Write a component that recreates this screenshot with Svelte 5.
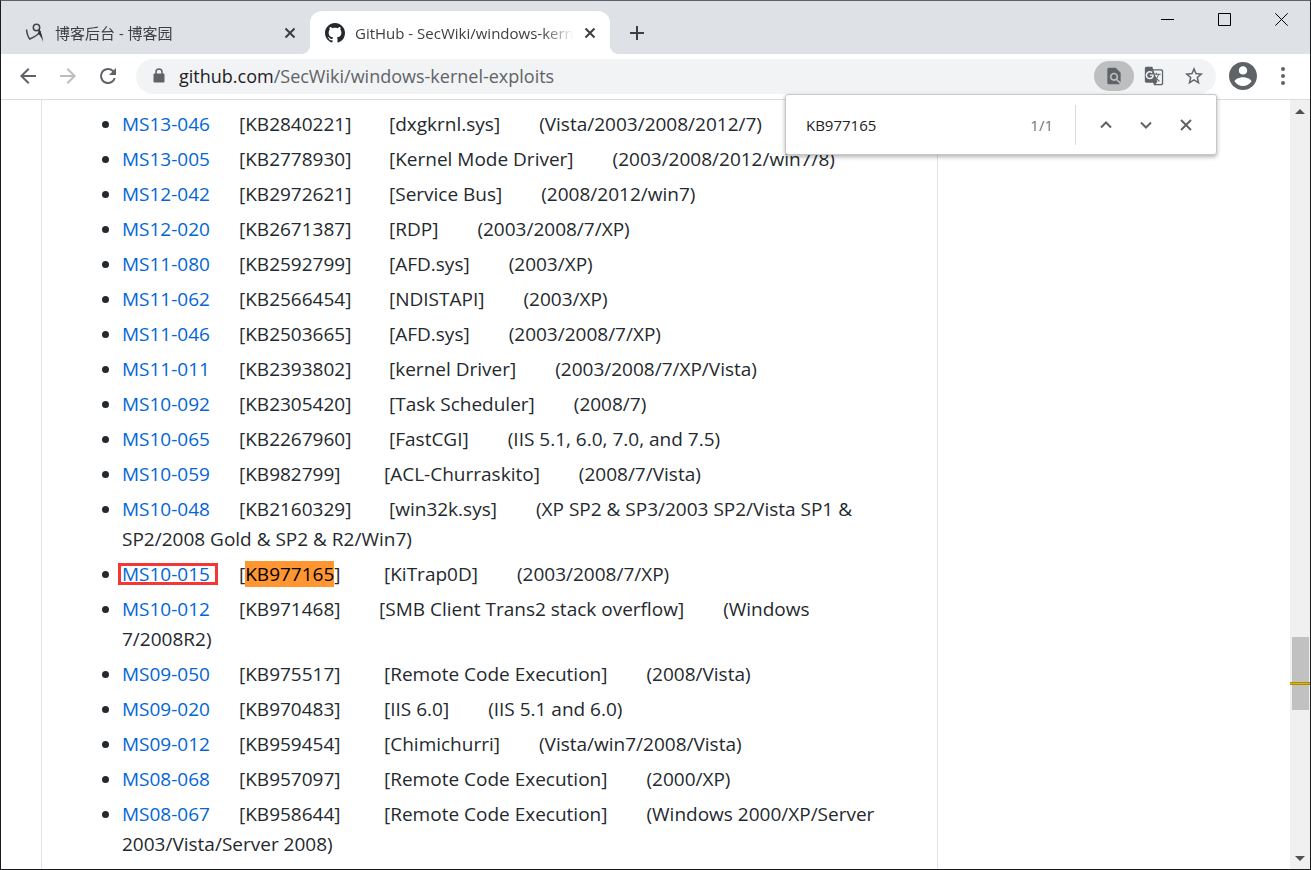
<script lang="ts">
	type Advisory = {
		id: string;
		kb: string;
		name: string;
		targets: string;
		gap?: 'short' | 'tight';
		marked?: boolean;
	};

	const advisories: Advisory[] = [
		{ id: 'MS13-046', kb: 'KB2840221', name: 'dxgkrnl.sys', targets: 'Vista/2003/2008/2012/7' },
		{ id: 'MS13-005', kb: 'KB2778930', name: 'Kernel Mode Driver', targets: '2003/2008/2012/win7/8' },
		{ id: 'MS12-042', kb: 'KB2972621', name: 'Service Bus', targets: '2008/2012/win7' },
		{ id: 'MS12-020', kb: 'KB2671387', name: 'RDP', targets: '2003/2008/7/XP' },
		{ id: 'MS11-080', kb: 'KB2592799', name: 'AFD.sys', targets: '2003/XP' },
		{ id: 'MS11-062', kb: 'KB2566454', name: 'NDISTAPI', targets: '2003/XP' },
		{ id: 'MS11-046', kb: 'KB2503665', name: 'AFD.sys', targets: '2003/2008/7/XP' },
		{ id: 'MS11-011', kb: 'KB2393802', name: 'kernel Driver', targets: '2003/2008/7/XP/Vista' },
		{ id: 'MS10-092', kb: 'KB2305420', name: 'Task Scheduler', targets: '2008/7' },
		{ id: 'MS10-065', kb: 'KB2267960', name: 'FastCGI', targets: 'IIS 5.1, 6.0, 7.0, and 7.5' },
		{ id: 'MS10-059', kb: 'KB982799', name: 'ACL-Churraskito', targets: '2008/7/Vista', gap: 'short' },
		{ id: 'MS10-048', kb: 'KB2160329', name: 'win32k.sys', targets: 'XP SP2 & SP3/2003 SP2/Vista SP1 & SP2/2008 Gold & SP2 & R2/Win7' },
		{ id: 'MS10-015', kb: 'KB977165', name: 'KiTrap0D', targets: '2003/2008/7/XP', gap: 'short', marked: true },
		{ id: 'MS10-012', kb: 'KB971468', name: 'SMB Client Trans2 stack overflow', targets: 'Windows 7/2008R2', gap: 'tight' },
		{ id: 'MS09-050', kb: 'KB975517', name: 'Remote Code Execution', targets: '2008/Vista', gap: 'short' },
		{ id: 'MS09-020', kb: 'KB970483', name: 'IIS 6.0', targets: 'IIS 5.1 and 6.0', gap: 'short' },
		{ id: 'MS09-012', kb: 'KB959454', name: 'Chimichurri', targets: 'Vista/win7/2008/Vista', gap: 'short' },
		{ id: 'MS08-068', kb: 'KB957097', name: 'Remote Code Execution', targets: '2000/XP', gap: 'short' },
		{ id: 'MS08-067', kb: 'KB958644', name: 'Remote Code Execution', targets: 'Windows 2000/XP/Server 2003/Vista/Server 2008', gap: 'short' }
	];

	let query = $state('KB977165');
</script>

<div class="window">
	<header class="tab-strip">
		<div class="tab">
			<svg class="favicon" viewBox="0 0 20 20" aria-hidden="true">
				<circle cx="11.5" cy="4.500" r="3.200" fill="none" stroke="#444" stroke-width="1.500" />
				<path d="M1.500 6.500c.4 3.500 1.200 7 3.300 9.500 4.500-1.800 8-4 10.800-7.600" fill="none" stroke="#444" stroke-width="1.500" />
				<path d="M14 5.500c2.200 3.500 3.600 8 4.200 13.500-1.200-3.600-2.800-6.500-5.200-8.500z" fill="#333" />
			</svg>
			<span class="tab-title">博客后台 - 博客园</span>
			<button class="tab-close" aria-label="Close tab">
				<svg viewBox="0 0 12 12"><path d="M1.500 1.500l9 9M10.500 1.500l-9 9" /></svg>
			</button>
		</div>
		<div class="tab active">
			<svg class="favicon" viewBox="0 0 16 16" aria-hidden="true">
				<path fill="#24292e" d="M8 0C3.580 0 0 3.580 0 8c0 3.540 2.290 6.530 5.470 7.590.4.070.55-.17.55-.38 0-.19-.01-.82-.01-1.490-2.010.37-2.530-.49-2.690-.94-.09-.23-.48-.94-.82-1.130-.28-.15-.68-.52-.01-.53.63-.01 1.080.58 1.230.82.72 1.210 1.870.87 2.330.66.070-.52.28-.87.51-1.070-1.780-.2-3.640-.89-3.640-3.950 0-.87.31-1.590.82-2.150-.08-.2-.36-1.020.08-2.120 0 0 .67-.21 2.200.82.64-.18 1.320-.27 2-.27s1.360.09 2 .27c1.530-1.040 2.200-.82 2.200-.82.44 1.100.16 1.920.08 2.120.51.56.82 1.270.82 2.150 0 3.070-1.870 3.750-3.650 3.950.29.25.54.73.54 1.480 0 1.070-.01 1.930-.01 2.200 0 .21.15.46.55.38A8.010 8.010 0 0016 8c0-4.420-3.580-8-8-8z" />
			</svg>
			<span class="tab-title">GitHub - SecWiki/windows-kernel-exploits</span>
			<button class="tab-close" aria-label="Close tab">
				<svg viewBox="0 0 12 12"><path d="M1.500 1.500l9 9M10.500 1.500l-9 9" /></svg>
			</button>
		</div>
		<button class="new-tab" aria-label="New tab">
			<svg viewBox="0 0 16 16"><path d="M8 1v14M1 8h14" /></svg>
		</button>
		<div class="window-controls">
			<button aria-label="Minimize">
				<svg viewBox="0 0 13 13"><path d="M0 6.500h13" /></svg>
			</button>
			<button aria-label="Maximize">
				<svg viewBox="0 0 13 13"><path d="M.5.5h12v12H.5z" /></svg>
			</button>
			<button aria-label="Close">
				<svg viewBox="0 0 13 13"><path d="M.3.3l12.400 12.400M12.700.3L.3 12.700" /></svg>
			</button>
		</div>
	</header>

	<nav class="toolbar">
		<button class="nav-button" aria-label="Back">
			<svg viewBox="0 0 24 24"><path d="M20 11H7.830l5.590-5.590L12 4l-8 8 8 8 1.410-1.410L7.830 13H20v-2z" /></svg>
		</button>
		<button class="nav-button" aria-label="Forward" disabled>
			<svg viewBox="0 0 24 24"><path d="M12 4l-1.410 1.410L16.170 11H4v2h12.170l-5.580 5.590L12 20l8-8z" /></svg>
		</button>
		<button class="nav-button" aria-label="Reload">
			<svg viewBox="0 0 24 24"><path d="M17.650 6.350A7.960 7.960 0 0012 4a8 8 0 107.730 10h-2.080A6 6 0 1112 6c1.660 0 3.140.69 4.220 1.780L13 11h7V4l-2.350 2.350z" /></svg>
		</button>

		<div class="omnibox">
			<svg class="lock" viewBox="0 0 12 16" aria-hidden="true">
				<path d="M3 6V4a3 3 0 016 0v2" fill="none" stroke="#5f6368" stroke-width="1.500" />
				<rect x="0.500" y="5.500" width="11" height="9" rx="1" fill="#5f6368" />
			</svg>
			<a class="url" href="https://github.com/SecWiki/windows-kernel-exploits"><b>github.com</b>/SecWiki/windows-kernel-exploits</a>
			<button class="page-action pressed" aria-label="Find in page">
				<svg viewBox="0 0 24 24"><path d="M20 19.590V8l-6-6H6c-1.100 0-1.990.9-1.990 2L4 20c0 1.100.89 2 1.990 2H18c.45 0 .85-.15 1.190-.4l-4.430-4.430c-.8.52-1.740.83-2.760.83-2.760 0-5-2.240-5-5s2.240-5 5-5 5 2.240 5 5c0 1.020-.31 1.960-.83 2.750L20 19.590zM9 13c0 1.660 1.340 3 3 3s3-1.340 3-3-1.340-3-3-3-3 1.340-3 3z" /></svg>
			</button>
			<button class="page-action" aria-label="Translate this page">
				<svg viewBox="0 0 24 24"><path d="M21 4H11l-1-3H3c-1.100 0-2 .9-2 2v15c0 1.100.9 2 2 2h8l1 3h9c1.100 0 2-.9 2-2V6c0-1.100-.9-2-2-2zM7 16c-2.760 0-5-2.240-5-5s2.240-5 5-5c1.350 0 2.480.5 3.350 1.300L9.030 8.570c-.38-.36-1.040-.78-2.030-.78-1.740 0-3.150 1.440-3.150 3.210S5.260 14.210 7 14.210c2.010 0 2.840-1.440 2.920-2.410H7v-1.710h4.680c.070.31.12.61.12 1.020C11.800 13.970 9.890 16 7 16zm6.170-5.420h3.700c-.43 1.250-1.110 2.430-2.050 3.470-.31-.35-.6-.72-.86-1.100l-.79-2.370zm8.330 9.920c0 .55-.45 1-1 1H14l2-2.500-1.040-3.100 3.100 3.100.92-.92-3.300-3.250.02-.02c1.130-1.250 1.930-2.690 2.400-4.220H20v-1.300h-4.530V8h-1.290v1.290h-1.440L11.460 5.500h9.040c.55 0 1 .45 1 1v14z" /></svg>
			</button>
			<button class="page-action" aria-label="Bookmark this page">
				<svg viewBox="1 1 22 22"><path d="M22 9.240l-7.190-.62L12 2 9.190 8.630 2 9.240l5.460 4.730L5.820 21 12 17.270 18.180 21l-1.630-7.030L22 9.240zM12 15.400l-3.760 2.270 1-4.280-3.320-2.880 4.380-.38L12 6.100l1.710 4.040 4.380.38-3.320 2.880 1 4.280L12 15.400z" /></svg>
			</button>
		</div>

		<button class="profile" aria-label="Profile">
			<svg viewBox="2 2 20 20"><path d="M12 2C6.480 2 2 6.480 2 12s4.480 10 10 10 10-4.480 10-10S17.520 2 12 2zm0 3c1.660 0 3 1.340 3 3s-1.340 3-3 3-3-1.340-3-3 1.340-3 3-3zm0 14.200c-2.500 0-4.710-1.280-6-3.220.03-1.990 4-3.080 6-3.080 1.990 0 5.970 1.090 6 3.080-1.290 1.940-3.500 3.220-6 3.220z" /></svg>
		</button>
		<button class="menu" aria-label="Menu">
			<svg viewBox="0 0 4 18"><circle cx="2" cy="2" r="2" /><circle cx="2" cy="9" r="2" /><circle cx="2" cy="16" r="2" /></svg>
		</button>
	</nav>

	<div class="viewport">
		<main class="readme">
			<ul>
				{#each advisories as item}
					<li>
						<span class="id"><a href="#{item.id}" class:marked={item.marked}>{item.id}</a></span><span class="kb {item.gap}">[{#if item.kb === query}<mark>{item.kb}</mark>{:else}{item.kb}{/if}]</span><span class="name">[{item.name}]</span><wbr />({item.targets})
					</li>
				{/each}
			</ul>
		</main>
		<aside></aside>
		<div class="scrollbar">
			<svg viewBox="0 0 10 5"><path d="M5 0l5 5H0z" /></svg>
			<div class="track">
				<div class="thumb"></div>
				<div class="match"></div>
			</div>
			<svg viewBox="0 0 10 5"><path d="M0 0h10L5 5z" /></svg>
		</div>
	</div>

	<form class="find-bar" onsubmit={(e) => e.preventDefault()}>
		<input type="text" bind:value={query} aria-label="Find in page" />
		<output>1/1</output>
		<span class="divider"></span>
		<button type="button" aria-label="Previous">
			<svg viewBox="0 0 12 12"><path d="M1 8.500l5-5 5 5" /></svg>
		</button>
		<button type="button" aria-label="Next">
			<svg viewBox="0 0 12 12"><path d="M1 3.500l5 5 5-5" /></svg>
		</button>
		<button type="button" aria-label="Close find bar">
			<svg viewBox="0 0 12 12"><path d="M1 1l10 10M11 1L1 11" /></svg>
		</button>
	</form>
</div>

<style>
	:global(body) {
		margin: 0;
	}

	.window {
		position: relative;
		display: flex;
		flex-direction: column;
		box-sizing: border-box;
		height: 100vh;
		border: 1px solid #1b1b1d;
		border-top-color: #606166;
		background: #fff;
		color: #24292e;
		font-family: 'Open Sans', 'Noto Sans CJK SC', sans-serif;
		overflow: hidden;
	}

	button {
		display: flex;
		flex-shrink: 0;
		align-items: center;
		justify-content: center;
		padding: 0;
		border: 0;
		background: none;
		color: #5f6368;
	}

	svg {
		display: block;
		fill: currentColor;
	}

	/* Tabs */
	.tab-strip {
		display: flex;
		flex-shrink: 0;
		height: 53px;
		padding-left: 9px;
		background: #dee1e6;
	}

	.tab {
		position: relative;
		display: flex;
		align-items: center;
		box-sizing: border-box;
		width: 300px;
		height: 43px;
		margin-top: 10px;
		padding: 0 10px 0 15px;
		border-radius: 12px 12px 0 0;
	}

	.tab.active {
		background: #fff;
	}

	/* Curved feet that join the active tab to the toolbar */
	.tab.active::before,
	.tab.active::after {
		content: '';
		position: absolute;
		bottom: 0;
		width: 10px;
		height: 10px;
	}

	.tab.active::before {
		right: 100%;
		background: radial-gradient(circle at 0 0, transparent 10px, #fff 11px);
	}

	.tab.active::after {
		left: 100%;
		background: radial-gradient(circle at 100% 0, transparent 10px, #fff 11px);
	}

	.favicon {
		flex-shrink: 0;
		width: 20px;
		height: 20px;
	}

	.tab-title {
		flex: 1;
		margin: 0 6px 0 10px;
		overflow: hidden;
		color: #3c4043;
		font-size: 15px;
		line-height: 24px;
		white-space: nowrap;
		mask-image: linear-gradient(to left, transparent, #000 32px);
	}

	.tab-close {
		width: 20px;
		height: 20px;
	}

	.tab-close svg,
	.new-tab svg {
		width: 12px;
		height: 12px;
		stroke: #3c4043;
		stroke-width: 2;
	}

	.new-tab {
		width: 34px;
		height: 43px;
		margin: 10px 0 0 10px;
	}

	.new-tab svg {
		width: 16px;
		height: 16px;
	}

	.window-controls {
		display: flex;
		height: 37px;
		margin-left: auto;
	}

	.window-controls button {
		width: 57px;
	}

	.window-controls svg {
		width: 13px;
		height: 13px;
		fill: none;
		stroke: #000;
	}

	/* Toolbar */
	.toolbar {
		display: flex;
		flex-shrink: 0;
		align-items: flex-start;
		height: 45px;
		padding: 0 7px;
		border-bottom: 1px solid #dadce0;
	}

	.nav-button {
		width: 40px;
		height: 44px;
	}

	.nav-button svg {
		width: 24px;
		height: 24px;
	}

	.nav-button:disabled {
		color: #bcbec1;
	}

	.omnibox {
		display: flex;
		flex: 1;
		align-items: center;
		box-sizing: border-box;
		min-width: 0;
		height: 35px;
		margin: 5px 0 0 8px;
		padding: 0 2px 1px 17px;
		border-radius: 18px;
		background: #f1f3f4;
	}

	.lock {
		flex-shrink: 0;
		width: 12px;
		height: 16px;
	}

	.url {
		flex: 1;
		min-width: 0;
		margin-left: 14px;
		overflow: hidden;
		color: #5f6368;
		font-size: 18px;
		line-height: 28px;
		text-decoration: none;
		white-space: nowrap;
	}

	.url b {
		color: #202124;
		font-weight: 400;
	}

	.page-action {
		width: 40px;
		height: 30px;
		border-radius: 15px;
	}

	.page-action.pressed {
		background: #bdbec0;
	}

	.page-action svg {
		width: 20px;
		height: 20px;
	}

	.profile {
		width: 28px;
		height: 44px;
		margin-left: 13px;
	}

	.profile svg {
		width: 28px;
		height: 28px;
	}

	.menu {
		width: 40px;
		height: 44px;
		margin-left: 6px;
	}

	.menu svg {
		width: 4px;
		height: 18px;
	}

	/* Page */
	.viewport {
		display: flex;
		flex: 1;
		min-height: 0;
		overflow: hidden;
	}

	.readme {
		flex: 1;
		min-width: 0;
		margin-left: 40px;
		padding: 9px 40px 0;
		border: solid #e1e4e8;
		border-width: 0 1px;
	}

	aside {
		width: 352px;
	}

	ul {
		margin: 0;
		padding-left: 40px;
		font-size: 19px;
		line-height: 30px;
	}

	li + li {
		margin-top: 5px;
	}

	a {
		color: #0366d6;
		text-decoration: none;
	}

	.id {
		display: inline-block;
		width: 117px;
	}

	.kb {
		display: inline-block;
		width: 150px;
	}

	.kb.short {
		width: 145px;
	}

	.kb.tight {
		width: 140px;
	}

	.name {
		margin-right: 39px;
	}

	mark {
		background: #ff9632;
		color: #000;
	}

	.marked {
		position: relative;
	}

	.marked::after {
		content: '';
		position: absolute;
		inset: 2px -8px 2px -4px;
		border: 3px solid #f53636;
	}

	/* Scrollbar */
	.scrollbar {
		display: flex;
		flex-direction: column;
		align-items: center;
		box-sizing: border-box;
		width: 20px;
		padding: 9px 0 8px;
		background: #f0f0f0;
		color: #505050;
	}

	.scrollbar svg {
		width: 10px;
		height: 5px;
	}

	.track {
		position: relative;
		flex: 1;
		width: 100%;
	}

	.thumb {
		position: absolute;
		top: 70%;
		right: 1px;
		left: 2px;
		height: 73px;
		margin-top: 4px;
		background: #c1c1c1;
	}

	.match {
		position: absolute;
		top: 76%;
		right: 0;
		left: 0;
		height: 1px;
		margin-top: 4px;
		border: 1px solid #a88f00;
		border-width: 1px 0;
		background: #dcb900;
	}

	/* Find bar */
	.find-bar {
		position: absolute;
		top: 93px;
		right: 93px;
		display: flex;
		align-items: center;
		box-sizing: border-box;
		width: 432px;
		height: 61px;
		padding: 0 10px 0 20px;
		border: 1px solid #c8c8c8;
		border-radius: 3px;
		background: #fff;
		box-shadow: 0 2px 4px rgba(0, 0, 0, 0.3);
	}

	.find-bar input {
		flex: 1;
		min-width: 0;
		padding: 0;
		border: 0;
		outline: 0;
		background: none;
		color: #202124;
		font: 15px/24px 'Open Sans', sans-serif;
	}

	.find-bar output {
		color: #757575;
		font-size: 15px;
		line-height: 24px;
	}

	.divider {
		width: 1px;
		height: 40px;
		margin: 0 10px 0 22px;
		background: #dadce0;
	}

	.find-bar button {
		width: 40px;
		height: 40px;
	}

	.find-bar svg {
		width: 12px;
		height: 12px;
		fill: none;
		stroke: #5f6368;
		stroke-width: 2;
	}
</style>
